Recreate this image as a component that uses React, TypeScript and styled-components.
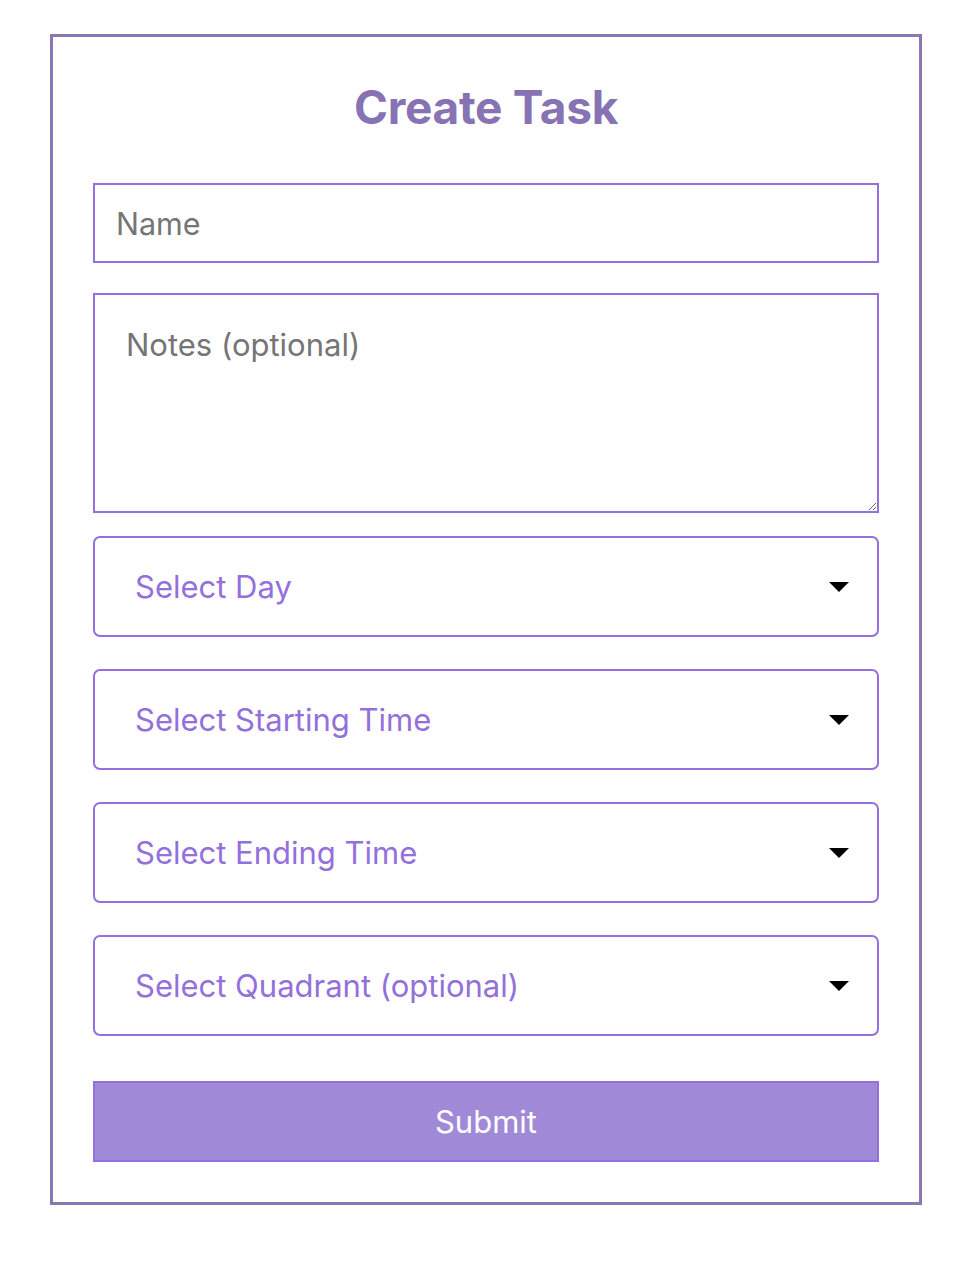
import React from "react";
import styled, { createGlobalStyle } from "styled-components";

const Global = createGlobalStyle`
  html, body { margin: 0; padding: 0; background: #ffffff; }
  body { font-family: Inter, "Noto Sans", sans-serif; }
  * { box-sizing: border-box; }
`;

const Page = styled.div`
  padding: 34px 36px 40px 50px;
`;

const Card = styled.form`
  width: 872px;
  border: 3px solid #8a78b5;
  padding: 40px 40px 40px;
  display: flex;
  flex-direction: column;
`;

const Title = styled.h1`
  margin: 0 0 46px;
  text-align: center;
  font-size: 46px;
  line-height: 60px;
  font-weight: 700;
  color: #8773b3;
  letter-spacing: -0.3px;
`;

const TextInput = styled.input`
  width: 100%;
  height: 80px;
  border: 2px solid #9370db;
  border-radius: 0;
  padding: 0 21px;
  font-family: inherit;
  font-size: 30.5px;
  color: #333;
  outline: none;
  &::placeholder { color: #757575; }
`;

const Notes = styled.textarea`
  width: 100%;
  height: 220px;
  margin-top: 30px;
  border: 2px solid #9370db;
  border-radius: 0;
  padding: 30px 31px;
  font-family: inherit;
  font-size: 31px;
  line-height: 40px;
  color: #333;
  outline: none;
  resize: vertical;
  display: block;
  &::placeholder { color: #757575; }
`;

const SelectWrap = styled.div<{ $first?: boolean }>`
  position: relative;
  margin-top: ${(p) => (p.$first ? "23px" : "32px")};
`;

const Select = styled.select`
  width: 100%;
  height: 101px;
  appearance: none;
  -webkit-appearance: none;
  background: #fff;
  border: 2px solid #9370db;
  border-radius: 7px;
  padding: 0 80px 0 40px;
  font-family: inherit;
  font-size: 31px;
  color: #9370db;
  outline: none;
`;

const Arrow = styled.svg`
  position: absolute;
  right: 30px;
  top: 50%;
  width: 20px;
  height: 10px;
  margin-top: -5px;
  pointer-events: none;
`;

const Submit = styled.button`
  margin-top: 45px;
  width: 100%;
  height: 81px;
  background: #a08ad8;
  border: 2px solid #9370db;
  border-radius: 0;
  color: #ffffff;
  font-family: inherit;
  font-size: 31px;
  cursor: pointer;
`;

const selects = [
  "Select Day",
  "Select Starting Time",
  "Select Ending Time",
  "Select Quadrant (optional)",
];

export default function App() {
  return (
    <>
      <Global />
      <Page>
        <Card onSubmit={(e) => e.preventDefault()}>
          <Title>Create Task</Title>
          <TextInput placeholder="Name" />
          <Notes placeholder="Notes (optional)" />
          {selects.map((label, i) => (
            <SelectWrap key={label} $first={i === 0}>
              <Select defaultValue="">
                <option value="" disabled>
                  {label}
                </option>
              </Select>
              <Arrow viewBox="0 0 20 10">
                <path d="M0 0 L20 0 L10 10 Z" fill="#000" />
              </Arrow>
            </SelectWrap>
          ))}
          <Submit type="submit">Submit</Submit>
        </Card>
      </Page>
    </>
  );
}
